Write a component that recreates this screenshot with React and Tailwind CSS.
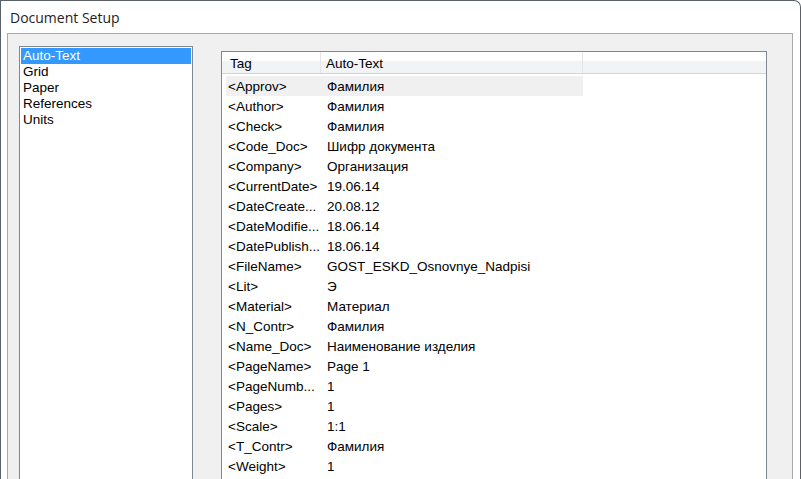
const sections = ["Auto-Text", "Grid", "Paper", "References", "Units"];

const rows = [
  ["<Approv>", "Фамилия"],
  ["<Author>", "Фамилия"],
  ["<Check>", "Фамилия"],
  ["<Code_Doc>", "Шифр документа"],
  ["<Company>", "Организация"],
  ["<CurrentDate>", "19.06.14"],
  ["<DateCreate...", "20.08.12"],
  ["<DateModifie...", "18.06.14"],
  ["<DatePublish...", "18.06.14"],
  ["<FileName>", "GOST_ESKD_Osnovnye_Nadpisi"],
  ["<Lit>", "Э"],
  ["<Material>", "Материал"],
  ["<N_Contr>", "Фамилия"],
  ["<Name_Doc>", "Наименование изделия"],
  ["<PageName>", "Page 1"],
  ["<PageNumb...", "1"],
  ["<Pages>", "1"],
  ["<Scale>", "1:1"],
  ["<T_Contr>", "Фамилия"],
  ["<Weight>", "1"],
];

export default function App() {
  return (
    <div className="w-[801px] h-[479px] overflow-hidden bg-white font-['Liberation_Sans',Arial,sans-serif] text-black">
      <div className="h-[520px] border-l border-r border-t border-[#5b6167] rounded-tr-[7px] bg-white flex flex-col">
        {/* title */}
        <div className="shrink-0 h-[32px] pl-[9px] pt-[1px] flex items-center font-['Open_Sans',sans-serif] text-[14px] text-[#1e1e1e]">
          Document Setup
        </div>

        <div className="flex-1 min-h-0 ml-[6px] mr-[7px] border border-[#a9a9a9] bg-[#f0f0f0] flex items-start pl-[11px] pt-[12px]">
          {/* section list */}
          <div className="shrink-0 w-[174px] h-[470px] border border-[#828790] bg-white p-[1px] text-[13.5px]">
            {sections.map((s, i) => (
              <div
                key={s}
                className={
                  "h-[16px] leading-[16px] pl-[2px] " +
                  (i === 0 ? "bg-[#3399ff] text-white" : "")
                }
              >
                {s}
              </div>
            ))}
          </div>

          {/* auto-text table */}
          <div className="shrink-0 ml-[28px] mt-[5px] w-[546px] h-[470px] border border-[#828790] bg-white text-[13.5px]">
            <div className="h-[22px] flex bg-[linear-gradient(#ffffff_0%,#ffffff_40%,#f2f3f5_45%,#f2f3f5_100%)] border-b border-[#d5d5d5]">
              <div className="w-[99px] pl-[8px] pt-[2px] leading-[20px] border-r border-[#e3e5e8]">Tag</div>
              <div className="w-[262px] pl-[5px] pt-[2px] leading-[20px] border-r border-[#e3e5e8]">Auto-Text</div>
              <div className="flex-1"></div>
            </div>
            <div className="pt-[2px]">
              {rows.map(([tag, val], i) => (
                <div
                  key={tag}
                  className={
                    "h-[20px] pt-[1px] leading-[19px] flex ml-[4px] w-[357px] " +
                    (i === 0 ? "bg-[#f0f0f0]" : "")
                  }
                >
                  <div className="w-[98px] pl-[2px] whitespace-nowrap overflow-hidden">{tag}</div>
                  <div className="flex-1 pl-[3px] whitespace-nowrap">{val}</div>
                </div>
              ))}
            </div>
          </div>
        </div>
      </div>
    </div>
  );
}
